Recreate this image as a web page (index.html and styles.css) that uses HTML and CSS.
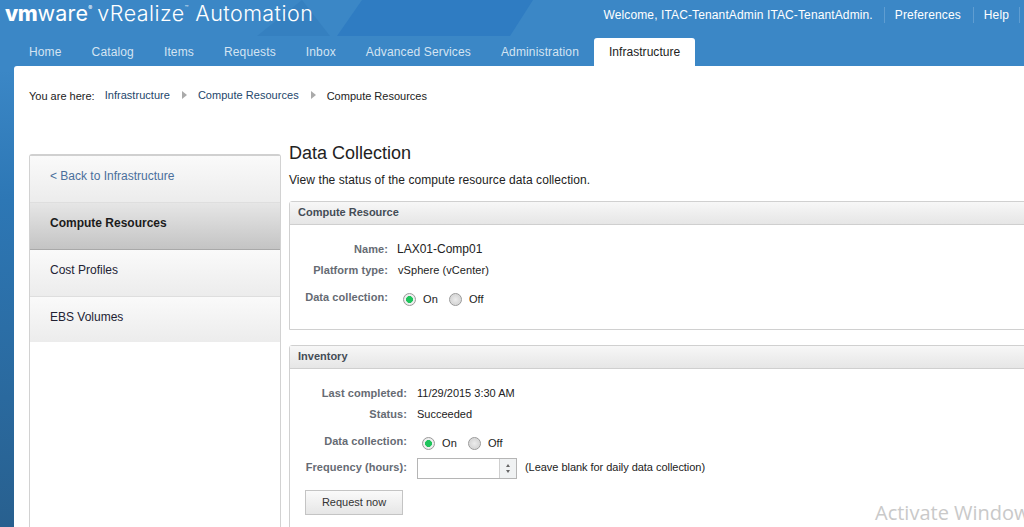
FILE: index.html
```html
<!DOCTYPE html>
<html lang="en">
<head>
    <meta charset="UTF-8">
    <meta name="viewport" content="width=device-width, initial-scale=1.0">
    <title>Data Collection</title>
    <link rel="stylesheet" href="styles.css">
</head>
<body>

<header class="top-bar">
    <svg class="top-shape" width="280" height="36" viewBox="0 0 280 36" aria-hidden="true">
        <polygon points="45,0 73,36 0,36" fill="#3580c0"/>
        <polygon points="105,0 276,0 253,36 80,36" fill="#2f7cc2"/>
    </svg>
    <div class="brand">
        <span class="logo"><b>vm</b>ware<sup>&reg;</sup></span>
        <span class="product">vRealize<sup>&trade;</sup> Automation</span>
    </div>
    <div class="user-links">
        <span>Welcome, ITAC-TenantAdmin ITAC-TenantAdmin.</span>
        <a href="#">Preferences</a>
        <a href="#">Help</a>
    </div>
</header>

<nav class="tabs">
    <a href="#">Home</a>
    <a href="#">Catalog</a>
    <a href="#">Items</a>
    <a href="#">Requests</a>
    <a href="#">Inbox</a>
    <a href="#">Advanced Services</a>
    <a href="#">Administration</a>
    <a href="#" class="active">Infrastructure</a>
</nav>

<div class="page">
    <div class="breadcrumb">
        <span class="here">You are here:</span>
        <a href="#">Infrastructure</a>
        <i class="crumb-arrow"></i>
        <a href="#">Compute Resources</a>
        <i class="crumb-arrow"></i>
        <span class="current">Compute Resources</span>
    </div>

    <div class="columns">
        <aside class="sidebar">
            <a href="#" class="side-item back">&lt; Back to Infrastructure</a>
            <a href="#" class="side-item selected">Compute Resources</a>
            <a href="#" class="side-item">Cost Profiles</a>
            <a href="#" class="side-item">EBS Volumes</a>
        </aside>

        <main class="content">
            <h1>Data Collection</h1>
            <p class="intro">View the status of the compute resource data collection.</p>

            <section class="panel">
                <h2>Compute Resource</h2>
                <div class="panel-body first">
                    <div class="row row-name">
                        <label>Name:</label>
                        <span class="name-value">LAX01-Comp01</span>
                    </div>
                    <div class="row row-platform">
                        <label>Platform type:</label>
                        <span class="platform-value">vSphere (vCenter)</span>
                    </div>
                    <div class="row row-radio">
                        <label>Data collection:</label>
                        <span class="radios">
                            <i class="radio on"></i><span>On</span>
                            <i class="radio"></i><span>Off</span>
                        </span>
                    </div>
                </div>
            </section>

            <section class="panel">
                <h2>Inventory</h2>
                <div class="panel-body second">
                    <div class="row row-last">
                        <label>Last completed:</label>
                        <span>11/29/2015 3:30 AM</span>
                    </div>
                    <div class="row row-status">
                        <label>Status:</label>
                        <span>Succeeded</span>
                    </div>
                    <div class="row row-radio">
                        <label>Data collection:</label>
                        <span class="radios">
                            <i class="radio on"></i><span>On</span>
                            <i class="radio"></i><span>Off</span>
                        </span>
                    </div>
                    <div class="row row-freq">
                        <label>Frequency (hours):</label>
                        <span class="spinner">
                            <span class="spinner-input"></span>
                            <span class="spinner-btns">
                                <i class="up"></i>
                                <i class="down"></i>
                            </span>
                        </span>
                        <span class="hint">(Leave blank for daily data collection)</span>
                    </div>
                    <button class="request-btn" type="button">Request now</button>
                </div>
            </section>
        </main>
    </div>
</div>

<div class="watermark">Activate Windows</div>

</body>
</html>
```

FILE: styles.css
```css
html, body {
    height: 527px;
    overflow: hidden;
}
body {
    margin: 0;
    padding: 0;
    font-family: "Liberation Sans", Arial, sans-serif;
    font-size: 12px;
    color: #222;
    background: linear-gradient(to bottom, #3b87c6 0, #3b87c6 70px, #2d77b5 200px, #28608f 527px);
}
a {
    text-decoration: none;
    color: inherit;
}

/* top band */
.top-bar {
    position: relative;
    height: 36px;
    display: flex;
    justify-content: space-between;
    align-items: flex-start;
    padding: 0 0 0 5px;
    color: #fff;
}
.top-shape {
    position: absolute;
    left: 257px;
    top: 0;
}
.brand {
    position: relative;
    display: flex;
    align-items: baseline;
    gap: 5px;
    padding-top: 1px;
}
.logo {
    font-family: Inter, sans-serif;
    font-size: 21.5px;
    line-height: 25px;
    letter-spacing: 0.2px;
}
.logo b {
    font-weight: 800;
    letter-spacing: -0.4px;
}
.logo sup, .product sup {
    font-size: 6px;
    vertical-align: 11px;
    line-height: 0;
}
.product {
    font-family: Inter, sans-serif;
    font-size: 21.5px;
    font-weight: 300;
    line-height: 25px;
    letter-spacing: 0.45px;
}
.user-links {
    position: relative;
    display: flex;
    font-size: 12px;
    line-height: 16px;
    padding: 7px 4px 0 0;
    letter-spacing: 0.12px;
}
.user-links a {
    margin-left: 11px;
    padding-left: 10px;
    border-left: 1px solid #5f9dd1;
}
.user-links a:last-child {
    margin-left: 12px;
    padding-right: 10px;
    border-right: 1px solid #5f9dd1;
}

/* main tabs */
.tabs {
    display: flex;
    height: 28px;
    padding: 2px 0 0 14px;
}
.tabs a {
    padding: 0 15px;
    line-height: 28px;
    color: #d4e4f2;
    letter-spacing: 0.14px;
}
.tabs a.active {
    background: #fff;
    color: #222;
    letter-spacing: 0.04px;
    border-radius: 3px 3px 0 0;
}

/* white page */
.page {
    margin-left: 14px;
    height: 461px;
    background: #fff;
    border-radius: 3px 0 0 0;
    overflow: hidden;
}
.breadcrumb {
    display: flex;
    align-items: center;
    height: 14px;
    padding: 23px 0 0 15px;
    font-size: 11px;
}
.breadcrumb a {
    color: #23466b;
    position: relative;
    top: -1px;
    letter-spacing: 0.03px;
}
.here {
    margin-right: 10px;
}
.crumb-arrow {
    width: 0;
    height: 0;
    margin: -3px 11px 0 12px;
    border-left: 5px solid #aaa;
    border-top: 4px solid transparent;
    border-bottom: 4px solid transparent;
}
.columns {
    display: flex;
    margin-top: 51px;
    padding-left: 15px;
}

/* left menu */
.sidebar {
    width: 250px;
    height: 400px;
    flex: none;
    border: 1px solid #d2d2d2;
    border-top: 2px solid #d0d0d0;
    border-radius: 3px 3px 0 0;
}
.side-item {
    display: block;
    height: 46px;
    line-height: 40px;
    padding-left: 20px;
    border-bottom: 1px solid #dedede;
    color: #223;
    background: linear-gradient(to bottom, #fafafa, #ececec);
}
.side-item:last-child {
    height: 45px;
    border-bottom: none;
}
.side-item.back {
    color: #4a6f9c;
}
.side-item.selected {
    font-weight: bold;
    color: #1c1c1c;
    background: linear-gradient(to bottom, #e6e6e6, #c4c4c4);
    border-bottom: 1px solid #a9a9a9;
}

/* right side */
.content {
    flex: 1;
    margin-left: 8px;
    min-width: 0;
}
.content h1 {
    margin: -11px 0 0;
    font-size: 18px;
    font-weight: normal;
    line-height: 21px;
    color: #222;
}
.intro {
    margin: 9px 0 0;
    line-height: 14px;
    letter-spacing: 0.07px;
}
.panel {
    margin: 14px -4px 15px 0;
    border: 1px solid #d0d0d0;
    border-radius: 3px 3px 0 0;
}
.panel h2 {
    margin: 0;
    height: 22px;
    line-height: 21px;
    padding-left: 8px;
    font-size: 11px;
    color: #444c56;
    border-bottom: 1px solid #cfcfcf;
    background: linear-gradient(to bottom, #f7f7f7, #e6e6e6);
}
.panel + .panel {
    margin-top: 0;
}
.panel-body {
    position: relative;
    font-size: 11px;
}
.panel-body.first {
    height: 104px;
}
.panel-body.second {
    height: 200px;
}
.row {
    display: flex;
    align-items: center;
    height: 16px;
    color: #222;
}
.row label {
    flex: none;
    text-align: right;
    font-weight: bold;
    color: #666b73;
    font-size: 11px;
    letter-spacing: 0.06px;
}
.first .row label {
    width: 98px;
    margin-right: 9px;
}
.second .row label {
    width: 117px;
    margin-right: 10px;
}
.row-name {
    padding-top: 16px;
}
.name-value {
    font-size: 12px;
}
.platform-value {
    margin-left: 1px;
    letter-spacing: 0.06px;
}
.row-platform {
    padding-top: 5px;
}
.first .row-radio {
    padding-top: 13px;
}
.row-radio label {
    position: relative;
    top: -2px;
}
.radios {
    display: flex;
    align-items: center;
    font-size: 11px;
    padding-left: 5px;
}
.first .radios {
    padding-left: 6px;
}
.radio {
    box-sizing: border-box;
    width: 13px;
    height: 13px;
    margin-right: 7px;
    border-radius: 50%;
    border: 1px solid #999;
    background: radial-gradient(circle, #ececec 0, #d8d8d8 60%, #eee 100%);
}
.radios span {
    margin-right: 11px;
    letter-spacing: 0.1px;
}
.radio.on {
    background: radial-gradient(circle, #1fc45c 0, #1fc45c 42%, #f2f2f2 48%, #e4e4e4 100%);
}
.row-last {
    padding-top: 16px;
}
.row-status {
    padding-top: 5px;
}
.second .row-radio {
    padding-top: 13px;
}
.row-freq {
    height: 21px;
    padding-top: 7px;
}
.row-freq label, .row-freq .hint {
    margin-bottom: 3px;
}
.spinner {
    display: flex;
    width: 100px;
    height: 21px;
    box-sizing: border-box;
    border: 1px solid #b5b5b5;
}
.spinner-input {
    flex: 1;
    background: #fff;
}
.spinner-btns {
    display: flex;
    flex-direction: column;
    align-items: center;
    justify-content: center;
    gap: 3px;
    width: 16px;
    border-left: 1px solid #cfcfcf;
    background: #f0f2f3;
}
.spinner-btns i {
    width: 0;
    height: 0;
    border-left: 2.5px solid transparent;
    border-right: 2.5px solid transparent;
}
.spinner-btns .up {
    border-bottom: 3px solid #666;
}
.spinner-btns .down {
    border-top: 3px solid #666;
}
.hint {
    margin-left: 8px;
    letter-spacing: -0.04px;
}
.request-btn {
    display: block;
    width: 98px;
    height: 25px;
    margin: 11px 0 0 15px;
    padding: 0 0 2px;
    font-family: inherit;
    font-size: 11px;
    color: #333;
    border: 1px solid #c4c4c4;
    background: linear-gradient(to bottom, #fafafa, #e6e6e6);
}

/* leftover OS overlay */
.watermark {
    position: absolute;
    left: 875px;
    top: 500px;
    font-family: "Open Sans", sans-serif;
    font-size: 20px;
    line-height: 26px;
    color: #c9c9c9;
    white-space: nowrap;
}
```
